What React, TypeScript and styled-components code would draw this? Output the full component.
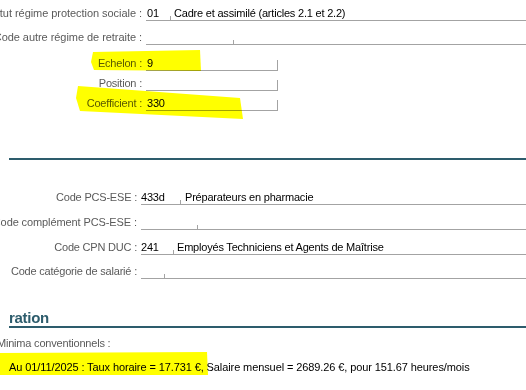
import React from "react";
import styled, { createGlobalStyle } from "styled-components";

const GlobalStyle = createGlobalStyle`
  html, body {
    margin: 0;
    padding: 0;
    background: #fff;
  }
  body {
    font-family: "Liberation Sans", Arial, sans-serif;
    font-size: 11px;
    letter-spacing: -0.2px;
    color: #000;
  }
`;

type Tick = "short" | "tall" | "none";

const Page = styled.div`
  position: relative;
  width: 526px;
  height: 390px;
  overflow: hidden;
`;

const Section = styled.div`
  display: flex;
  flex-direction: column;
`;

const Row = styled.div<{ $h: number }>`
  display: flex;
  align-items: flex-end;
  height: ${(p) => p.$h}px;
`;

const Label = styled.div<{ $w: number; $ls?: number }>`
  width: ${(p) => p.$w}px;
  flex-shrink: 0;
  margin-right: 4px;
  display: flex;
  justify-content: flex-end;
  white-space: nowrap;
  line-height: 13px;
  padding-bottom: 1px;
  letter-spacing: ${(p) => p.$ls ?? -0.2}px;
  color: #5a5a5a;
`;

const Field = styled.div<{ $w?: number; $tick?: Tick; $pad?: number }>`
  position: relative;
  flex: ${(p) => (p.$w ? `0 0 ${p.$w}px` : "1 1 auto")};
  box-sizing: border-box;
  height: 14px;
  line-height: 13px;
  padding-left: ${(p) => p.$pad ?? 1}px;
  border-bottom: 1px solid #a3a3a3;
  white-space: nowrap;
  &::after {
    content: "";
    display: ${(p) => (p.$tick && p.$tick !== "none" ? "block" : "none")};
    position: absolute;
    right: 0;
    bottom: -1px;
    width: 1px;
    height: ${(p) => (p.$tick === "tall" ? 11 : 5)}px;
    background: #a3a3a3;
  }
`;

const Divider = styled.div<{ $top: number }>`
  margin: ${(p) => p.$top}px 0 0 9px;
  height: 2px;
  background: #2d5c6c;
`;

const Heading = styled.div`
  margin: 0 0 0 9px;
  height: 49px;
  box-sizing: border-box;
  display: flex;
  align-items: flex-end;
  border-bottom: 2px solid #2d5c6c;
  font-size: 15px;
  line-height: 17px;
  font-weight: bold;
  letter-spacing: -0.3px;
  color: #2d5c6c;
`;

const Note = styled.div`
  margin: 8px 0 0 -3px;
  line-height: 14px;
  color: #5a5a5a;
  white-space: nowrap;
`;

const Rate = styled.div`
  margin: 10px 0 0 9px;
  line-height: 14px;
  letter-spacing: -0.1px;
  white-space: nowrap;
`;

const Marker = styled.div<{ $clip: string }>`
  position: absolute;
  left: 0;
  top: 0;
  width: 526px;
  height: 390px;
  background: #ffff00;
  mix-blend-mode: multiply;
  pointer-events: none;
  clip-path: polygon(${(p) => p.$clip});
`;

const App: React.FC = () => {
  return (
    <Page>
      <GlobalStyle />
      <Section>
        <Row $h={21}>
          <Label $w={142} $ls={-0.05}>Code statut régime protection sociale :</Label>
          <Field $w={25} $tick="short">01</Field>
          <Field $pad={3}>Cadre et assimilé (articles 2.1 et 2.2)</Field>
        </Row>
        <Row $h={24}>
          <Label $w={142} $ls={-0.05}>Code autre régime de retraite :</Label>
          <Field $w={88} $tick="short" />
          <Field />
        </Row>
        <Row $h={26}>
          <Label $w={142}>Echelon :</Label>
          <Field $w={132} $tick="tall">9</Field>
        </Row>
        <Row $h={20}>
          <Label $w={142}>Position :</Label>
          <Field $w={132} $tick="tall" />
        </Row>
        <Row $h={20}>
          <Label $w={142}>Coefficient :</Label>
          <Field $w={132} $tick="tall">330</Field>
        </Row>
      </Section>

      <Divider $top={47} />

      <Section>
        <Row $h={45}>
          <Label $w={137}>Code PCS-ESE :</Label>
          <Field $w={40} $tick="short" $pad={0}>433d</Field>
          <Field $pad={4}>Préparateurs en pharmacie</Field>
        </Row>
        <Row $h={25}>
          <Label $w={137} $ls={-0.1}>Code complément PCS-ESE :</Label>
          <Field $w={57} $tick="short" />
          <Field />
        </Row>
        <Row $h={25}>
          <Label $w={137}>Code CPN DUC :</Label>
          <Field $w={33} $tick="short" $pad={0}>241</Field>
          <Field $pad={3}>Employés Techniciens et Agents de Maîtrise</Field>
        </Row>
        <Row $h={24}>
          <Label $w={137}>Code catégorie de salarié :</Label>
          <Field $w={24} $tick="short" />
          <Field />
        </Row>
      </Section>

      <Heading>ration</Heading>
      <Note>Minima conventionnels :</Note>
      <Rate>
        Au 01/11/2025 : Taux horaire = 17.731 €, Salaire mensuel = 2689.26 €,
        pour 151.67 heures/mois
      </Rate>

      <Marker $clip="93px 52px, 200px 50px, 201px 71px, 94px 70px, 91px 62px" />
      <Marker $clip="78px 86px, 240px 98px, 243px 119px, 80px 111px, 76px 98px" />
      <Marker $clip="0px 353px, 207px 352px, 208px 375px, 0px 375px" />
    </Page>
  );
};

export default App;
